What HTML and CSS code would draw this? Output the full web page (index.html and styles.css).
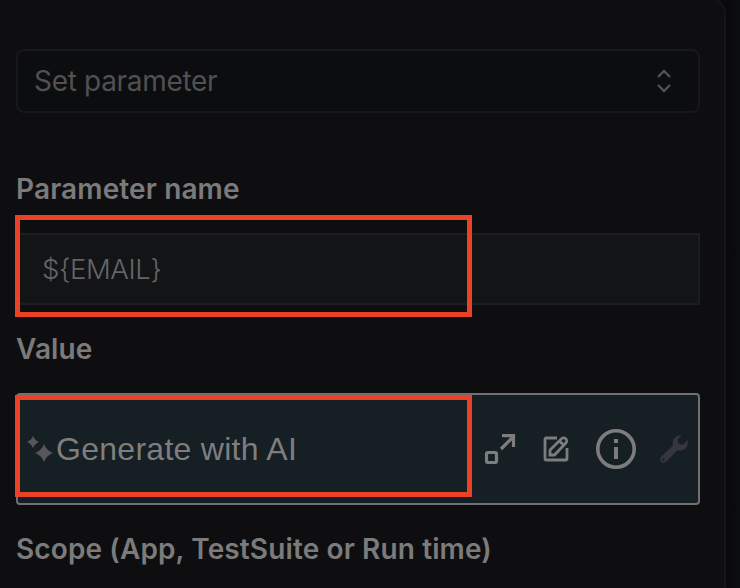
FILE: index.html
```html
<!DOCTYPE html>
<html lang="en">
<head>
<meta charset="utf-8">
<title>Set parameter</title>
<link rel="stylesheet" href="styles.css">
</head>
<body>
<main class="panel">
  <div class="select">
    <span class="select-text">Set parameter</span>
    <svg class="chevrons" width="16" height="24" viewBox="0 0 16 24"><path d="M2 8l6-6 6 6M2 16l6 6 6-6"/></svg>
  </div>
  <label class="label label-name">Parameter name</label>
  <div class="field">
    <span class="field-text">${EMAIL}</span>
    <div class="highlight highlight-name"></div>
  </div>
  <label class="label label-value">Value</label>
  <div class="value">
    <svg class="sparkles" width="28" height="28" viewBox="0 0 28 28"><path d="M7 1Q9 5.500 13 7Q9 8.500 7 13Q5 8.500 1 7Q5 5.500 7 1ZM18 9Q20.500 15.500 27 18Q20.500 20.500 18 27Q15.500 20.500 9 18Q15.500 15.500 18 9Z"/></svg>
    <span class="value-text">Generate with AI</span>
    <div class="actions">
      <svg class="icon expand" width="32" height="32" viewBox="0 0 32 32"><rect x="2.500" y="19.500" width="10" height="10" rx="1.500"/><path d="M17 16L29 4M18 2.700H29.500V14"/></svg>
      <svg class="icon edit" width="26" height="26" viewBox="0 0 26 26"><path d="M14 2H3.500Q2 2 2 3.500V22.500Q2 24 3.500 24H22.500Q24 24 24 22.500V12"/><path d="M7 19V14L18.500 2.700a2.900 2.900 0 0 1 4.300 4.300L11.500 19ZM16.500 5L21 9.500"/></svg>
      <svg class="icon info" width="40" height="40" viewBox="0 0 40 40"><circle cx="20" cy="20" r="18.200"/><path class="info-mark" d="M20 10V14M20 18V30"/></svg>
      <svg class="wrench" width="28" height="28" viewBox="0 0 28 28"><path fill-rule="evenodd" d="M21.500 .3Q17 -.3 14.300 3Q11.800 6 13 10.300L1 22Q-.8 24.500 1 26.800Q3.500 29 6 26.800L17.500 15.200Q22 16.500 25.500 13.500Q28.500 10.500 27.800 5.300L23.500 9.300Q21 10 19 8.800Q17.500 6.500 18 4ZM3.500 23.300a1.200 1.200 0 1 1 0 2.400a1.200 1.200 0 1 1 0-2.400Z"/></svg>
    </div>
    <div class="highlight highlight-value"></div>
  </div>
  <label class="label label-scope">Scope (App, TestSuite or Run time)</label>
</main>
</body>
</html>
```
FILE: styles.css
```css
* { box-sizing: border-box; }
body {
  margin: 0;
  height: 588px;
  overflow: hidden;
  background: linear-gradient(90deg, #09090b 726px, #0b0c0d 740px);
  font-family: Inter, sans-serif;
}
.panel {
  width: 726px;
  height: 620px;
  margin-top: -4px;
  padding: 53px 24px 0 16px;
  display: flex;
  flex-direction: column;
  background: #0e0e10;
  border-right: 2px solid #151516;
  border-top: 2px solid #151516;
  border-top-right-radius: 18px;
}
.select {
  flex: none;
  width: 684px;
  height: 64px;
  margin-top: -2px;
  padding: 0 26px 0 16px;
  display: flex;
  align-items: center;
  justify-content: space-between;
  background: #0b0d0e;
  border: 2px solid #18181a;
  border-radius: 8px;
}
.select-text {
  font-size: 28px;
  line-height: 40px;
  letter-spacing: -0.32px;
  color: #525053;
}
.chevrons { fill: none; stroke: #525154; stroke-width: 2.4; }
.label {
  flex: none;
  height: 40px;
  font-size: 28px;
  line-height: 40px;
  font-weight: 600;
  letter-spacing: 0.12px;
  color: #7c7b7b;
  white-space: nowrap;
}
.label-name { margin-top: 56px; }
.label-value { margin-top: 24px; }
.label-scope { margin-top: 24px; }
.field {
  position: relative;
  flex: none;
  width: 684px;
  height: 72px;
  margin-top: 24px;
  padding-left: 24px;
  display: flex;
  align-items: center;
  background: #131415;
  border: 2px solid #1c1d1e;
}
.field-text {
  font-size: 27.5px;
  line-height: 40px;
  font-weight: 350;
  letter-spacing: -0.4px;
  color: #656568;
}
.value {
  position: relative;
  flex: none;
  width: 684px;
  height: 112px;
  margin-top: 24px;
  padding: 0 10px 0 8px;
  display: flex;
  align-items: center;
  background: #151f24;
  border: 2px solid #707072;
  border-radius: 4px;
}
.sparkles { fill: #58555b; }
.value-text {
  margin-left: 2px;
  font-family: "Liberation Sans", Arial, sans-serif;
  font-size: 32px;
  line-height: 40px;
  letter-spacing: 0.28px;
  color: #7e7e7e;
  white-space: nowrap;
}
.actions { margin-left: auto; display: flex; align-items: center; }
.icon { fill: none; stroke: #7d7d7e; stroke-width: 3.200; }
.edit { margin-left: 27px; stroke-width: 2.8; }
.info { margin-left: 27px; stroke-width: 3.600; }
.info-mark { stroke-width: 4; }
.wrench { margin-left: 24px; fill: #35363f; }
.highlight {
  position: absolute;
  left: -3px;
  width: 457px;
  height: 102px;
  border: 5px solid #eb4127;
}
.highlight-name { top: -20px; }
.highlight-value { top: 0; }
```
